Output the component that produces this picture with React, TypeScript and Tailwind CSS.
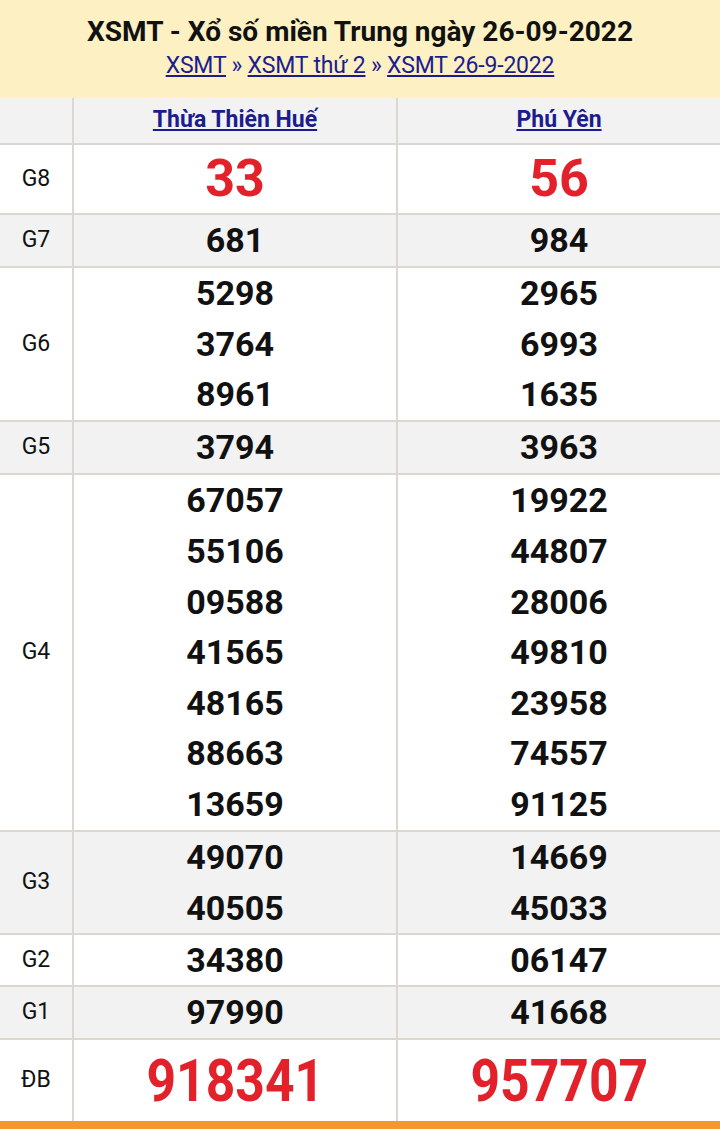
const rows: { label: string; h: string; bg: string; a: string[]; b: string[]; kind?: "g8" | "db" }[] = [
  { label: "G8", h: "h-[70px]", bg: "bg-white", a: ["33"], b: ["56"], kind: "g8" },
  { label: "G7", h: "h-[53px]", bg: "bg-[#f2f2f2]", a: ["681"], b: ["984"] },
  { label: "G6", h: "h-[154px]", bg: "bg-white", a: ["5298", "3764", "8961"], b: ["2965", "6993", "1635"] },
  { label: "G5", h: "h-[53px]", bg: "bg-[#f2f2f2]", a: ["3794"], b: ["3963"] },
  {
    label: "G4",
    h: "h-[357px]",
    bg: "bg-white",
    a: ["67057", "55106", "09588", "41565", "48165", "88663", "13659"],
    b: ["19922", "44807", "28006", "49810", "23958", "74557", "91125"],
  },
  { label: "G3", h: "h-[103px]", bg: "bg-[#f2f2f2]", a: ["49070", "40505"], b: ["14669", "45033"] },
  { label: "G2", h: "h-[52px]", bg: "bg-white", a: ["34380"], b: ["06147"] },
  { label: "G1", h: "h-[53px]", bg: "bg-[#f2f2f2]", a: ["97990"], b: ["41668"] },
  { label: "ĐB", h: "h-[81px]", bg: "bg-white", a: ["918341"], b: ["957707"], kind: "db" },
];

function Cell({ nums, kind }: { nums: string[]; kind?: "g8" | "db" }) {
  return (
    <div className="flex flex-col items-center justify-center border-l-2 border-[#ddd8cf]">
      {nums.map((n) =>
        kind === "g8" ? (
          <span key={n} className="text-[52px] font-bold leading-none text-[#e3212b]">
            {n}
          </span>
        ) : kind === "db" ? (
          <span key={n} className="scale-x-[0.86] text-[60px] font-bold leading-none text-[#e3212b]">
            {n}
          </span>
        ) : (
          <span key={n} className="text-[34px] font-bold leading-[50.6px] text-[#111]">
            {n}
          </span>
        )
      )}
    </div>
  );
}

export default function App() {
  return (
    <div className="w-[720px] bg-white font-['Roboto','Liberation_Sans',sans-serif] text-[#111]">
      {/* header */}
      <div className="flex h-[98px] flex-col items-center bg-[#fdf1c4] pt-[12px]">
        <h1 className="text-[28px] font-bold leading-[40px]">
          XSMT - Xổ số miền Trung ngày 26-09-2022
        </h1>
        <p className="text-[23px] leading-[28px] tracking-[-0.2px] text-[#1c1c8e]">
          <a className="underline">XSMT</a> » <a className="underline">XSMT thứ 2</a> »{" "}
          <a className="underline">XSMT 26-9-2022</a>
        </p>
      </div>

      {/* table */}
      <div className="grid h-[47px] grid-cols-[72px_1fr_1fr] border-b-2 border-[#ddd8cf] bg-[#f2f2f2]">
        <div />
        <div className="flex items-center justify-center border-l-2 border-[#ddd8cf] text-[23px] font-bold text-[#1c1c8e] underline">
          Thừa Thiên Huế
        </div>
        <div className="flex items-center justify-center border-l-2 border-[#ddd8cf] text-[23px] font-bold text-[#1c1c8e] underline">
          Phú Yên
        </div>
      </div>
      {rows.map((r, i) => (
        <div
          key={r.label}
          className={`grid grid-cols-[72px_1fr_1fr] ${r.h} ${r.bg} ${i < rows.length - 1 ? "border-b-2" : ""} border-[#ddd8cf]`}
        >
          <div className="flex items-center justify-center text-[23px]">{r.label}</div>
          <Cell nums={r.a} kind={r.kind} />
          <Cell nums={r.b} kind={r.kind} />
        </div>
      ))}
      <div className="h-[8px] bg-[#f7962b]" />
    </div>
  );
}
